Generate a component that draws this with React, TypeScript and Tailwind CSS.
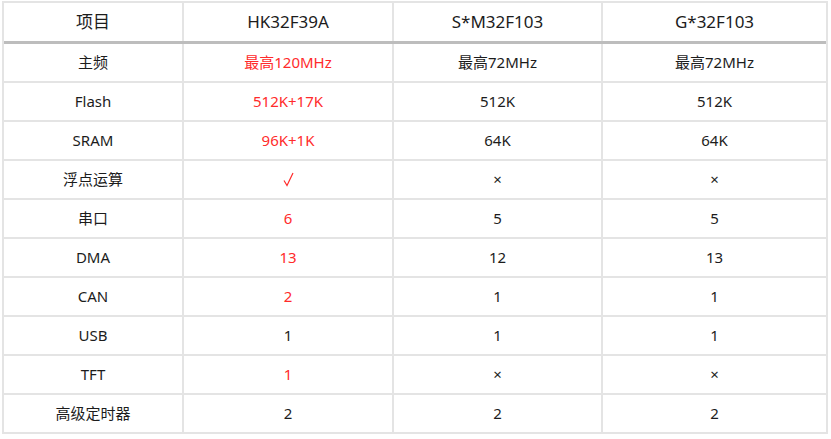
const header = ['项目', 'HK32F39A', 'S*M32F103', 'G*32F103'];

type Row = [string, string, string, string, boolean];

const rows: Row[] = [
  ['主频', '最高120MHz', '最高72MHz', '最高72MHz', true],
  ['Flash', '512K+17K', '512K', '512K', true],
  ['SRAM', '96K+1K', '64K', '64K', true],
  ['浮点运算', '√', '×', '×', true],
  ['串口', '6', '5', '5', true],
  ['DMA', '13', '12', '13', true],
  ['CAN', '2', '1', '1', true],
  ['USB', '1', '1', '1', false],
  ['TFT', '1', '×', '×', true],
  ['高级定时器', '2', '2', '2', false],
];

const widths = ['w-[180px]', 'w-[210px]', 'w-[209px]', 'flex-1'];

function Check() {
  return (
    <svg width="11" height="15" viewBox="0 0 11 15" fill="none" aria-label="√">
      <path d="M1 8.5 L4 13.5 L10 1" stroke="#ff2b2b" strokeWidth="1.2" strokeLinejoin="miter" />
    </svg>
  );
}

export default function App() {
  return (
    <div
      className="w-[831px] h-[439px] bg-white pl-[2px] pt-[1px] text-[#1c1c1c]"
      style={{ fontFamily: '"Noto Sans", "Noto Sans CJK SC", sans-serif' }}
    >
      <div className="w-[826px] border-2 border-[#e4e4e4]">
        {/* header */}
        <div className="flex h-[41px] border-b-[3px] border-[#bdbdbd] text-[17px]">
          {header.map((h, i) => (
            <div
              key={h}
              className={`${widths[i]} flex items-center justify-center ${i < 3 ? 'border-r-2 border-[#e4e4e4]' : ''}`}
            >
              {h}
            </div>
          ))}
        </div>
        {rows.map((r, idx) => (
          <div
            key={r[0]}
            className={`flex text-[15px] ${idx < rows.length - 1 ? 'h-[39px] border-b-2 border-[#e4e4e4]' : 'h-[37px]'}`}
          >
            {[r[0], r[1], r[2], r[3]].map((c, i) => (
              <div
                key={i}
                className={`${widths[i]} flex items-center justify-center ${i < 3 ? 'border-r-2 border-[#e4e4e4]' : ''} ${i === 1 && r[4] ? 'text-[#ff2b2b]' : ''}`}
              >
                {c === '√' ? <Check /> : c}
              </div>
            ))}
          </div>
        ))}
      </div>
    </div>
  );
}
